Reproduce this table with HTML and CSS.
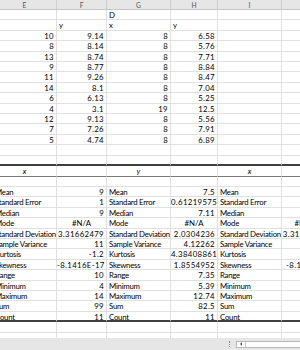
FILE: index.html
```html
<!DOCTYPE html>
<html>
<head>
<meta charset="utf-8">
<link rel="stylesheet" href="styles.css">
</head>
<body>
<div class="sheet">
  <div class="row hdr"><div class="c">E</div><div class="c">F</div><div class="c">G</div><div class="c">H</div><div class="c">I</div><div class="c">J</div></div>
  <div class="row"><div class="c"></div><div class="c"></div><div class="c">D</div><div class="c"></div><div class="c"></div><div class="c"></div></div>
  <div class="row"><div class="c"></div><div class="c">y</div><div class="c">x</div><div class="c">y</div><div class="c"></div><div class="c"></div></div>
  <div class="row"><div class="c r">10</div><div class="c r">9.14</div><div class="c r">8</div><div class="c r">6.58</div><div class="c"></div><div class="c"></div></div>
  <div class="row"><div class="c r">8</div><div class="c r">8.14</div><div class="c r">8</div><div class="c r">5.76</div><div class="c"></div><div class="c"></div></div>
  <div class="row"><div class="c r">13</div><div class="c r">8.74</div><div class="c r">8</div><div class="c r">7.71</div><div class="c"></div><div class="c"></div></div>
  <div class="row"><div class="c r">9</div><div class="c r">8.77</div><div class="c r">8</div><div class="c r">8.84</div><div class="c"></div><div class="c"></div></div>
  <div class="row"><div class="c r">11</div><div class="c r">9.26</div><div class="c r">8</div><div class="c r">8.47</div><div class="c"></div><div class="c"></div></div>
  <div class="row"><div class="c r">14</div><div class="c r">8.1</div><div class="c r">8</div><div class="c r">7.04</div><div class="c"></div><div class="c"></div></div>
  <div class="row"><div class="c r">6</div><div class="c r">6.13</div><div class="c r">8</div><div class="c r">5.25</div><div class="c"></div><div class="c"></div></div>
  <div class="row"><div class="c r">4</div><div class="c r">3.1</div><div class="c r">19</div><div class="c r">12.5</div><div class="c"></div><div class="c"></div></div>
  <div class="row"><div class="c r">12</div><div class="c r">9.13</div><div class="c r">8</div><div class="c r">5.56</div><div class="c"></div><div class="c"></div></div>
  <div class="row"><div class="c r">7</div><div class="c r">7.26</div><div class="c r">8</div><div class="c r">7.91</div><div class="c"></div><div class="c"></div></div>
  <div class="row"><div class="c r">5</div><div class="c r">4.74</div><div class="c r">8</div><div class="c r">6.89</div><div class="c"></div><div class="c"></div></div>
  <div class="row"><div class="c"></div><div class="c"></div><div class="c"></div><div class="c"></div><div class="c"></div><div class="c"></div></div>
  <div class="row thick-b"><div class="c"></div><div class="c"></div><div class="c"></div><div class="c"></div><div class="c"></div><div class="c"></div></div>
  <div class="row thin-b"><div class="c m i">x</div><div class="c"></div><div class="c m i">y</div><div class="c"></div><div class="c m i">x</div><div class="c"></div></div>
  <div class="row"><div class="c"></div><div class="c"></div><div class="c"></div><div class="c"></div><div class="c"></div><div class="c"></div></div>
  <div class="row"><div class="c">Mean</div><div class="c r">9</div><div class="c">Mean</div><div class="c r">7.5</div><div class="c">Mean</div><div class="c r">9</div></div>
  <div class="row"><div class="c">Standard Error</div><div class="c r">1</div><div class="c">Standard Error</div><div class="c r">0.61219575</div><div class="c">Standard Error</div><div class="c r">1</div></div>
  <div class="row"><div class="c">Median</div><div class="c r">9</div><div class="c">Median</div><div class="c r">7.11</div><div class="c">Median</div><div class="c r">9</div></div>
  <div class="row"><div class="c">Mode</div><div class="c m">#N/A</div><div class="c">Mode</div><div class="c m">#N/A</div><div class="c">Mode</div><div class="c m">#N/A</div></div>
  <div class="row"><div class="c">Standard Deviation</div><div class="c r">3.31662479</div><div class="c">Standard Deviation</div><div class="c r">2.0304236</div><div class="c">Standard Deviation</div><div class="c r">3.3166248</div></div>
  <div class="row"><div class="c">Sample Variance</div><div class="c r">11</div><div class="c">Sample Variance</div><div class="c r">4.12262</div><div class="c">Sample Variance</div><div class="c r">11</div></div>
  <div class="row"><div class="c">Kurtosis</div><div class="c r">-1.2</div><div class="c">Kurtosis</div><div class="c r">4.38408861</div><div class="c">Kurtosis</div><div class="c r">-1.2</div></div>
  <div class="row"><div class="c">Skewness</div><div class="c r">-8.1416E-17</div><div class="c">Skewness</div><div class="c r">1.8554952</div><div class="c">Skewness</div><div class="c r">-8.14E-17</div></div>
  <div class="row"><div class="c">Range</div><div class="c r">10</div><div class="c">Range</div><div class="c r">7.35</div><div class="c">Range</div><div class="c r">10</div></div>
  <div class="row"><div class="c">Minimum</div><div class="c r">4</div><div class="c">Minimum</div><div class="c r">5.39</div><div class="c">Minimum</div><div class="c r">4</div></div>
  <div class="row"><div class="c">Maximum</div><div class="c r">14</div><div class="c">Maximum</div><div class="c r">12.74</div><div class="c">Maximum</div><div class="c r">14</div></div>
  <div class="row"><div class="c">Sum</div><div class="c r">99</div><div class="c">Sum</div><div class="c r">82.5</div><div class="c">Sum</div><div class="c r">99</div></div>
  <div class="row thick-b"><div class="c">Count</div><div class="c r">11</div><div class="c">Count</div><div class="c r">11</div><div class="c">Count</div><div class="c r">11</div></div>
  <div class="row"><div class="c"></div><div class="c"></div><div class="c"></div><div class="c"></div><div class="c"></div><div class="c"></div></div>
  <div class="row"><div class="c"></div><div class="c"></div><div class="c"></div><div class="c"></div><div class="c"></div><div class="c"></div></div>
</div>
<div class="tabbar">
  <div class="grip"></div>
  <div class="hscroll"><div class="hbtn"><span class="arrow-left"></span></div></div>
</div>
</body>
</html>
```
FILE: styles.css
```css
html, body {
  margin: 0;
  padding: 0;
}
body {
  width: 300px;
  height: 350px;
  overflow: hidden;
  background: #ffffff;
  font-family: Lato, "Liberation Sans", sans-serif;
}
.sheet {
  height: 338px;
  overflow: hidden;
}
.row {
  display: grid;
  grid-template-columns: 64px 50px 64px 47px 64px 45px;
  margin-left: -7px;
  height: 10.42px;
}
.c {
  box-sizing: border-box;
  border-right: 1px solid #e0e0e0;
  border-bottom: 1px solid #e0e0e0;
  font-size: 7.8px;
  line-height: 10px;
  padding: 0 0 0 2px;
  letter-spacing: -0.25px;
  white-space: nowrap;
  overflow: hidden;
  color: #000000;
}
.r {
  text-align: right;
  padding: 0 2px 0 0;
  letter-spacing: 0.35px;
}
.m {
  text-align: center;
  padding: 0;
  letter-spacing: 0.1px;
}
.i { font-style: italic; }
.hdr {
  height: 10px;
  background: #e6e6e6;
}
.hdr .c {
  text-align: center;
  color: #555555;
  padding: 0;
  letter-spacing: 0;
  border-right-color: #cfcfcf;
  border-bottom-color: #c4c4c4;
  font-size: 6.6px;
  line-height: 10px;
}
.thick-b .c {
  border-bottom: 2px solid #3f3f3f;
}
.thin-b .c {
  border-bottom: 1px solid #7a7a7a;
}
.tabbar {
  height: 12px;
  background: #e6e6e6;
  display: flex;
  align-items: center;
  padding-left: 229px;
  gap: 6px;
}
.grip {
  width: 0;
  height: 6px;
  border-left: 1px dotted #8a8a8a;
}
.hscroll {
  flex: 1;
  height: 7px;
  box-sizing: border-box;
  background: #ffffff;
  border: 1px solid #b8b8b8;
  border-right: none;
  display: flex;
}
.hbtn {
  width: 8px;
  border-right: 1px solid #c8c8c8;
  display: flex;
  align-items: center;
  justify-content: center;
}
.arrow-left {
  width: 0;
  height: 0;
  border-top: 2px solid transparent;
  border-bottom: 2px solid transparent;
  border-right: 2px solid #555555;
}
```
